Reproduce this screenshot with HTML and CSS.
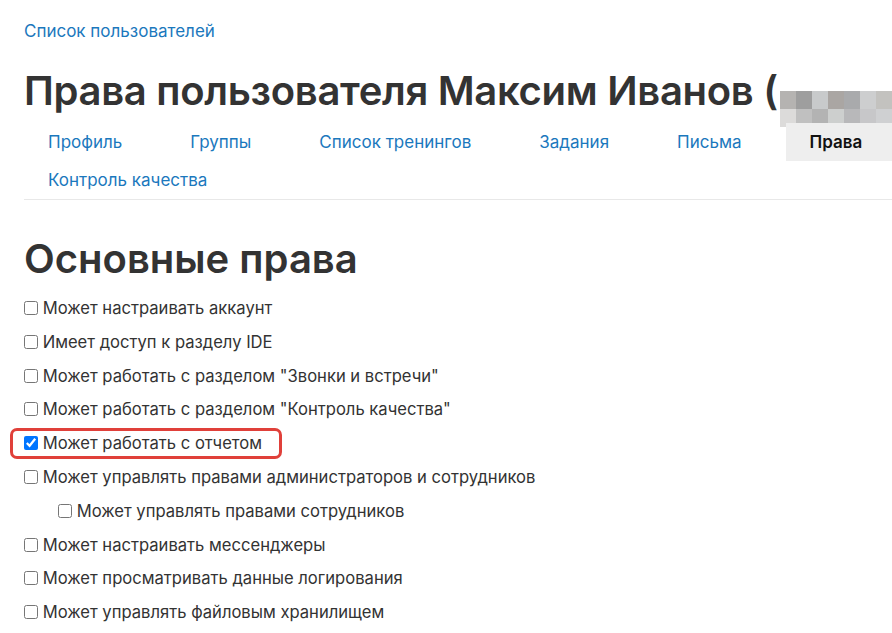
FILE: index.html
```html
<!DOCTYPE html>
<html lang="ru">
<head>
    <meta charset="UTF-8">
    <meta name="viewport" content="width=device-width, initial-scale=1.0">
    <title>Права пользователя</title>
    <link rel="stylesheet" href="styles.css">
</head>
<body>

<div class="page">
    <a class="crumb" href="#">Список пользователей</a>

    <h1 class="title">Права пользователя Максим Иванов (<span class="blur"><i class="c1"></i><i class="c2"></i><i class="c3"></i><i class="c4"></i><i class="c5"></i><i class="c6"></i><i class="c7"></i><i class="d1"></i><i class="d2"></i><i class="d3"></i><i class="d4"></i><i class="d5"></i><i class="d6"></i><i class="d7"></i></span></h1>

    <ul class="tabs">
        <li><a href="#">Профиль</a></li>
        <li><a href="#">Группы</a></li>
        <li><a href="#">Список тренингов</a></li>
        <li><a href="#">Задания</a></li>
        <li><a href="#">Письма</a></li>
        <li class="active"><a href="#">Права</a></li>
        <li><a href="#">Контроль качества</a></li>
    </ul>

    <h2 class="section">Основные права</h2>

    <ul class="perms">
        <li><label><input type="checkbox"> Может настраивать аккаунт</label></li>
        <li><label><input type="checkbox"> Имеет доступ к разделу IDE</label></li>
        <li><label><input type="checkbox"> Может работать с разделом "Звонки и встречи"</label></li>
        <li><label><input type="checkbox"> Может работать с разделом "Контроль качества"</label></li>
        <li class="marked"><label><input type="checkbox" checked> Может работать с отчетом</label></li>
        <li><label><input type="checkbox"> Может управлять правами администраторов и сотрудников</label></li>
        <li class="sub"><label><input type="checkbox"> Может управлять правами сотрудников</label></li>
        <li><label><input type="checkbox"> Может настраивать мессенджеры</label></li>
        <li><label><input type="checkbox"> Может просматривать данные логирования</label></li>
        <li><label><input type="checkbox"> Может управлять файловым хранилищем</label></li>
    </ul>
</div>

</body>
</html>
```

FILE: styles.css
```css
body {
    font-family: Inter, "Noto Sans", sans-serif;
    color: #333;
    background: #fff;
    margin: 0;
    overflow: hidden;
}
a {
    color: #1b78bd;
    text-decoration: none;
}
.page {
    padding: 20px 0 0 24px;
    white-space: nowrap;
    overflow: hidden;
    height: 613px;
}
.crumb {
    display: inline-block;
    font-size: 17px;
    line-height: 22px;
}
.title {
    font-size: 40px;
    font-weight: 600;
    line-height: 48px;
    margin: 25px 0 -4px;
    letter-spacing: -0.3px;
}
.blur {
    display: inline-grid;
    grid-template-columns: repeat(7, 16px);
    grid-template-rows: 18px 18px;
    vertical-align: -4px;
    margin-left: 2px;
}
.blur i { background: #c4c4c4; }
.blur .c1 { background: #b5b3b1; }
.blur .c2 { background: #9e9e9e; }
.blur .c3 { background: #c8cacb; }
.blur .c4 { background: #aaa6a3; }
.blur .c5 { background: #a9aaac; }
.blur .c6 { background: #cdcecf; }
.blur .c7 { background: #c3c2bf; }
.blur .d1 { background: #dcdbda; }
.blur .d2 { background: #c0c0c0; }
.blur .d3 { background: #b3b3b3; }
.blur .d4 { background: #cdcfce; }
.blur .d5 { background: #b8b8ba; }
.blur .d6 { background: #c7c7c9; }
.blur .d7 { background: #cfd0d2; }

.tabs {
    list-style: none;
    margin: 0;
    padding: 0;
    display: flex;
    flex-wrap: wrap;
    border-bottom: 1px solid #e8e8e8;
    width: 1000px;
}
.tabs li {
    margin-right: 20px;
}
.tabs a {
    display: block;
    padding: 0 24px;
    line-height: 38px;
    font-size: 17px;
}
.tabs .active a {
    background: #eee;
    color: #111;
    font-weight: 600;
    width: 82px;
}
.section {
    font-size: 40px;
    font-weight: 600;
    line-height: 48px;
    margin: 35px 0 9px;
}
.perms {
    list-style: none;
    margin: 0;
    padding: 0;
}
.perms li {
    font-size: 16.6px;
    line-height: 33.8px;
    position: relative;
}
.perms input {
    margin: 0;
    width: 14px;
    height: 14px;
    vertical-align: -1px;
}
.perms .sub {
    padding-left: 34px;
}
.perms .marked::before {
    content: "";
    position: absolute;
    left: -14px;
    top: 1px;
    width: 266px;
    height: 25px;
    border: 3px solid #e0403a;
    border-radius: 7px;
}
```
